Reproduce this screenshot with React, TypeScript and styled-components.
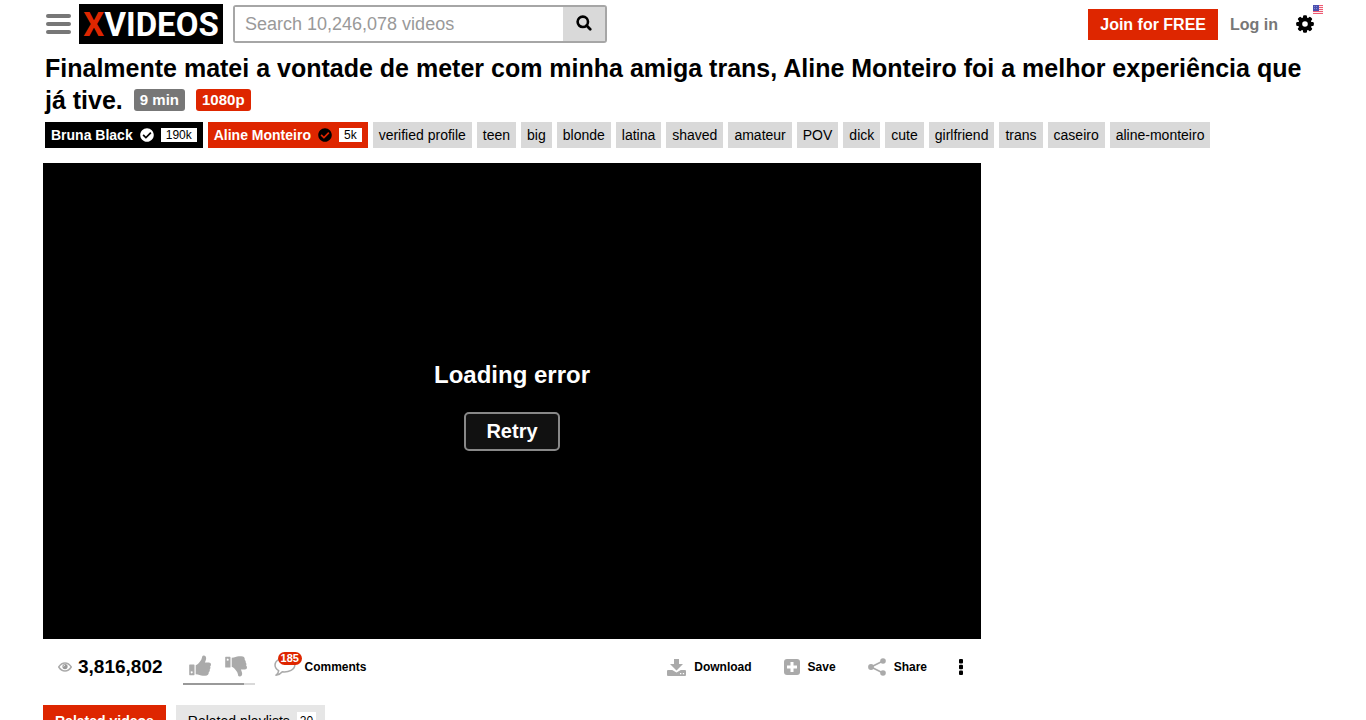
import React from 'react';
import styled, { createGlobalStyle } from 'styled-components';
import { FaCheckCircle } from 'react-icons/fa';

const red = '#de2600';

const GlobalStyle = createGlobalStyle`
  *, *::before, *::after { box-sizing: border-box; }
  html { scrollbar-width: none; }
  body {
    margin: 0;
    background: #fff;
    color: #000;
    font-family: "Liberation Sans", Arial, Helvetica, sans-serif;
    font-size: 14px;
  }
  button, input { font-family: inherit; }
  a { color: inherit; text-decoration: none; }
  svg { display: block; flex: none; }
`;

const Page = styled.div`
  padding: 0 43px;
`;

const Header = styled.header`
  display: flex;
  align-items: center;
  height: 48px;
`;

const PlainButton = styled.button`
  display: flex;
  align-items: center;
  gap: 8px;
  padding: 0;
  border: 0;
  background: none;
  color: inherit;
  cursor: pointer;
`;

const MenuButton = styled(PlainButton)`
  padding: 0 8px 0 3px;
`;

const Logo = styled.a`
  display: flex;
  align-items: center;
  justify-content: center;
  width: 144px;
  height: 40px;
  background: #000;
  color: #fff;
  font: bold 33px/40px Roboto, sans-serif;
  padding-top: 1px;
`;

const LogoAccent = styled.span`
  color: ${red};
`;

const SearchForm = styled.form`
  display: flex;
  flex: 0 1 374px;
  height: 38px;
  margin-left: 10px;
  border: 2px solid #a6a6a6;
  border-radius: 3px;
`;

const SearchInput = styled.input`
  flex: 1;
  min-width: 0;
  padding: 0 10px;
  border: 0;
  outline: 0;
  background: #fff;
  font-size: 18px;
  &::placeholder { color: #999; opacity: 1; }
`;

const SearchButton = styled.button`
  display: flex;
  align-items: center;
  justify-content: center;
  width: 42px;
  padding: 0 0 2px;
  border: 0;
  background: #d9d9d9;
  cursor: pointer;
`;

const Account = styled.nav`
  display: flex;
  align-items: center;
  margin-left: auto;
  font-size: 16px;
  font-weight: bold;
`;

const JoinLink = styled.a`
  padding: 0 12px;
  background: ${red};
  color: #fff;
  line-height: 31px;
`;

const LoginLink = styled.a`
  padding: 0 18px 0 12px;
  color: #777;
  line-height: 31px;
`;

const SettingsButton = styled(PlainButton)`
  position: relative;
  padding-right: 9px;
`;

const FlagBadge = styled.span`
  position: absolute;
  top: -10px;
  right: 0;
`;

const Title = styled.h1`
  margin: 4px 0 6px;
  padding: 0 2px;
  font-size: 25px;
  line-height: 32px;
`;

const TitleBadge = styled.span<{ $hot?: boolean }>`
  display: inline-block;
  margin-left: 11px;
  padding: 0 6px;
  border-radius: 3px;
  background: ${p => (p.$hot ? red : '#777')};
  color: #fff;
  font-size: 15px;
  line-height: 22px;
  vertical-align: 4px;
`;

const TagList = styled.ul`
  display: flex;
  flex-wrap: wrap;
  gap: 5px;
  margin: 0 0 15px;
  padding: 0 2px;
  list-style: none;
`;

const Tag = styled.a`
  display: block;
  padding: 0 6px;
  background: #d9d9d9;
  line-height: 26px;
`;

const ModelTag = styled(Tag)<{ $main?: boolean }>`
  display: flex;
  align-items: center;
  gap: 7px;
  background: ${p => (p.$main ? '#000' : red)};
  color: #fff;
  font-weight: bold;
`;

const Count = styled.span`
  padding: 1px 5px 0;
  background: #fff;
  color: #000;
  font-size: 12px;
  font-weight: normal;
  line-height: 13px;
`;

const Columns = styled.div`
  display: grid;
  grid-template-columns: minmax(0, 1fr) 300px;
  gap: 42px;
`;

const Player = styled.section`
  display: flex;
  flex-direction: column;
  align-items: center;
  justify-content: center;
  gap: 23px;
  min-height: 476px;
  padding-top: 10px;
  background: #000;
  color: #fff;
`;

const PlayerMessage = styled.p`
  margin: 0;
  font-size: 24px;
  font-weight: bold;
  line-height: 28px;
`;

const RetryButton = styled.button`
  padding: 0 20px;
  border: 2px solid #888;
  border-radius: 5px;
  background: #111;
  color: #fff;
  font-size: 20px;
  font-weight: bold;
  line-height: 35px;
  cursor: pointer;
`;

const Actions = styled.div`
  display: flex;
  align-items: center;
  height: 56px;
  padding: 0 18px 0 15px;
  font-size: 12px;
  font-weight: bold;
`;

const Views = styled.span`
  display: flex;
  align-items: center;
  gap: 6px;
  font-size: 19px;
`;

const Votes = styled.div`
  display: flex;
  flex-direction: column;
  gap: 6px;
  width: 72px;
  margin: 6px 19px 0 20px;
`;

const VoteButtons = styled.div`
  display: flex;
  justify-content: space-between;
  padding: 0 8px 0 6px;
`;

const VoteBar = styled.div`
  height: 2px;
  background: #d9d9d9;
`;

const VoteFill = styled.div`
  height: 2px;
  background: #999;
`;

const ActionButton = styled(PlainButton)`
  font-size: 12px;
  font-weight: bold;
`;

const CommentButton = styled(ActionButton)`
  gap: 9px;
`;

const CommentIcon = styled.span`
  position: relative;
`;

const CommentCount = styled.span`
  position: absolute;
  top: -5px;
  left: 4px;
  padding: 0 3px;
  border-radius: 7px;
  background: ${red};
  color: #fff;
  font-size: 11px;
  line-height: 13px;
`;

const ActionGroup = styled.div`
  display: flex;
  align-items: center;
  gap: 32px;
  margin-left: auto;
`;

const Tabs = styled.div`
  display: flex;
  gap: 10px;
  padding-top: 10px;
`;

const Tab = styled.button<{ $active?: boolean }>`
  display: flex;
  align-items: center;
  gap: 7px;
  height: 32px;
  padding: 0 ${p => (p.$active ? 12 : 9)}px 0 12px;
  border: 0;
  background: ${p => (p.$active ? red : '#e6e6e6')};
  color: ${p => (p.$active ? '#fff' : '#000')};
  font-size: 14px;
  font-weight: ${p => (p.$active ? 'bold' : 'normal')};
  cursor: pointer;
`;

const TabCount = styled(Count)`
  padding: 0 3px;
  line-height: 18px;
`;

const MenuIcon = () => (
  <svg width="25" height="20" viewBox="0 0 25 20" fill="#777">
    <rect width="25" height="4" rx="2" />
    <rect y="8" width="25" height="4" rx="2" />
    <rect y="16" width="25" height="4" rx="2" />
  </svg>
);

const SearchIcon = () => (
  <svg width="16" height="16" viewBox="0 0 16 16" fill="none" stroke="#000">
    <circle cx="6.8" cy="6.8" r="5.2" strokeWidth="2.6" />
    <path d="M10.6 10.6L14.2 14.2" strokeWidth="2.8" strokeLinecap="round" />
  </svg>
);

const teeth = [0, 45, 90, 135, 180, 225, 270, 315];

const GearIcon = () => (
  <svg width="18" height="18" viewBox="0 0 18 18">
    {teeth.map(a => (
      <rect key={a} x="7" y="0.2" width="4" height="5" rx="1.2" transform={`rotate(${a} 9 9)`} />
    ))}
    <circle cx="9" cy="9" r="4.8" fill="none" stroke="#000" strokeWidth="4" />
  </svg>
);

const FlagIcon = () => (
  <svg width="10" height="9" viewBox="0 0 10 9">
    <rect width="10" height="9" fill="#fbeef1" />
    <path d="M0 .5H10M0 2.5H10M0 4.5H10M0 6.5H10M0 8.5H10" stroke="#ee5a72" />
    <rect width="6" height="6" fill="#4a4fae" />
    <path d="M1 1.5h4M1 3.5h4" stroke="#8086cc" strokeDasharray="1 1" />
  </svg>
);

const EyeIcon = () => (
  <svg width="14" height="10" viewBox="0 0 14 10" fill="none" stroke="#aaa">
    <path d="M.7 5Q3.3 1 7 1t6.3 4Q10.7 9 7 9T.7 5z" strokeWidth="1.4" />
    <circle cx="7" cy="4.6" r="2.6" fill="#999" stroke="none" />
    <path d="M5.6 4.5q.1-1.2 1.4-1.4" stroke="#fff" strokeWidth=".8" />
  </svg>
);

const ThumbIcon = ({ down }: { down?: boolean }) => (
  <svg width="22" height="22" viewBox="0 0 22 22" fill="#aaa">
    <g transform={down ? 'translate(0 22) scale(1 -1)' : undefined}>
      <path
        fillRule="evenodd"
        d="M.8 9.5h4.1q.6 0 .6.6v9.500q0 .6-.6.6H.8q-.6 0-.6-.6v-9.500q0-.6.6-.6zM2.700 16.300a1 1 0 1 0 .01 0z"
      />
      <path d="M6.700 10.200c2.200-.5 3.400-2.700 4.700-4.200.8-1 1.300-2 1.500-3.200.2-1.300.5-2.300 1.700-2.300 2 0 2.800 1.700 2.500 3.500-.2 1.300-.8 2.400-1.200 3.500h4c1.200 0 2.100.9 2.100 2 0 .9-.4 1.500-.9 1.900.6 1 .4 2.200-.4 3 .3 1-.1 2.100-.9 2.700.2 2.500-1.200 3.600-3.500 3.600h-2.500c-2.300 0-4.200-1.300-7.100-1.400z" />
    </g>
  </svg>
);

const BubbleIcon = () => (
  <svg width="22" height="20" viewBox="0 0 22 20" fill="none" stroke="#aaa" strokeWidth="1.5">
    <path d="M10.800 1C5.400 1 1 4 1 8c0 2.400 1.500 4.300 3.700 5.600-.2 1.700-1 3.200-2.700 4.600 2.800-.3 4.800-1.500 6.300-3.400 6.700.7 12.500-2.300 12.500-6.800C20.800 4 16.300 1 10.800 1z" strokeLinejoin="round" />
  </svg>
);

const DownloadIcon = () => (
  <svg width="19" height="18" viewBox="0 0 19 18" fill="#aaa">
    <path d="M7 1h5v5h4l-6.500 6.500L3 6h4z" />
    <path
      fillRule="evenodd"
      d="M1 12h4.200l4.300 2.500 4.300-2.500H18q1 0 1 1v4q0 1-1 1H1q-1 0-1-1v-4q0-1 1-1zM13 15v1.300h1.300V15zm2.800 0v1.300h1.300V15z"
    />
  </svg>
);

const SaveIcon = () => (
  <svg width="16" height="16" viewBox="0 0 16 16">
    <rect width="16" height="16" rx="3" fill="#aaa" />
    <path d="M8 3v10M3 8h10" stroke="#fff" strokeWidth="3" />
  </svg>
);

const ShareIcon = () => (
  <svg width="18" height="18" viewBox="0 0 18 18" fill="#aaa">
    <path d="M15 3L3 9l12 6" fill="none" stroke="#aaa" strokeWidth="1.6" />
    <circle cx="15" cy="3" r="2.8" />
    <circle cx="3" cy="9" r="2.9" />
    <circle cx="15" cy="15" r="2.8" />
  </svg>
);

const MoreIcon = () => (
  <svg width="4" height="16" viewBox="0 0 4 16">
    <rect width="4" height="4.6" rx="1" />
    <rect y="5.7" width="4" height="4.6" rx="1" />
    <rect y="11.4" width="4" height="4.6" rx="1" />
  </svg>
);

const tags = [
  'verified profile', 'teen', 'big', 'blonde', 'latina', 'shaved', 'amateur', 'POV',
  'dick', 'cute', 'girlfriend', 'trans', 'caseiro', 'aline-monteiro',
];

const likeShare = 86;

export default function App() {
  return (
    <Page>
      <GlobalStyle />
      <Header>
        <MenuButton type="button" aria-label="Menu"><MenuIcon /></MenuButton>
        <Logo href="#"><span><LogoAccent>X</LogoAccent>VIDEOS</span></Logo>
        <SearchForm role="search" onSubmit={e => e.preventDefault()}>
          <SearchInput type="text" aria-label="Search" placeholder="Search 10,246,078 videos" />
          <SearchButton type="submit" aria-label="Search"><SearchIcon /></SearchButton>
        </SearchForm>
        <Account>
          <JoinLink href="#">Join for FREE</JoinLink>
          <LoginLink href="#">Log in</LoginLink>
          <SettingsButton type="button" aria-label="Settings">
            <GearIcon />
            <FlagBadge><FlagIcon /></FlagBadge>
          </SettingsButton>
        </Account>
      </Header>
      <main>
        <Title>
          Finalmente matei a vontade de meter com minha amiga trans, Aline Monteiro foi a melhor experiência que já tive.
          <TitleBadge>9 min</TitleBadge>
          <TitleBadge $hot>1080p</TitleBadge>
        </Title>
        <TagList>
          <li><ModelTag href="#" $main>Bruna Black <FaCheckCircle size={14} /><Count>190k</Count></ModelTag></li>
          <li><ModelTag href="#">Aline Monteiro <FaCheckCircle size={14} color="#000" /><Count>5k</Count></ModelTag></li>
          {tags.map(t => <li key={t}><Tag href="#">{t}</Tag></li>)}
        </TagList>
        <Columns>
          <div>
            <Player>
              <PlayerMessage>Loading error</PlayerMessage>
              <RetryButton type="button">Retry</RetryButton>
            </Player>
            <Actions>
              <Views><EyeIcon />3,816,802</Views>
              <Votes>
                <VoteButtons>
                  <PlainButton type="button" aria-label="Like"><ThumbIcon /></PlainButton>
                  <PlainButton type="button" aria-label="Dislike"><ThumbIcon down /></PlainButton>
                </VoteButtons>
                <VoteBar><VoteFill style={{ width: `${likeShare}%` }} /></VoteBar>
              </Votes>
              <CommentButton type="button">
                <CommentIcon><BubbleIcon /><CommentCount>185</CommentCount></CommentIcon>
                Comments
              </CommentButton>
              <ActionGroup>
                <ActionButton type="button"><DownloadIcon />Download</ActionButton>
                <ActionButton type="button"><SaveIcon />Save</ActionButton>
                <ActionButton type="button"><ShareIcon />Share</ActionButton>
                <ActionButton type="button" aria-label="More"><MoreIcon /></ActionButton>
              </ActionGroup>
            </Actions>
            <Tabs>
              <Tab type="button" $active>Related videos</Tab>
              <Tab type="button">Related playlists<TabCount>20</TabCount></Tab>
            </Tabs>
          </div>
        </Columns>
      </main>
    </Page>
  );
}
